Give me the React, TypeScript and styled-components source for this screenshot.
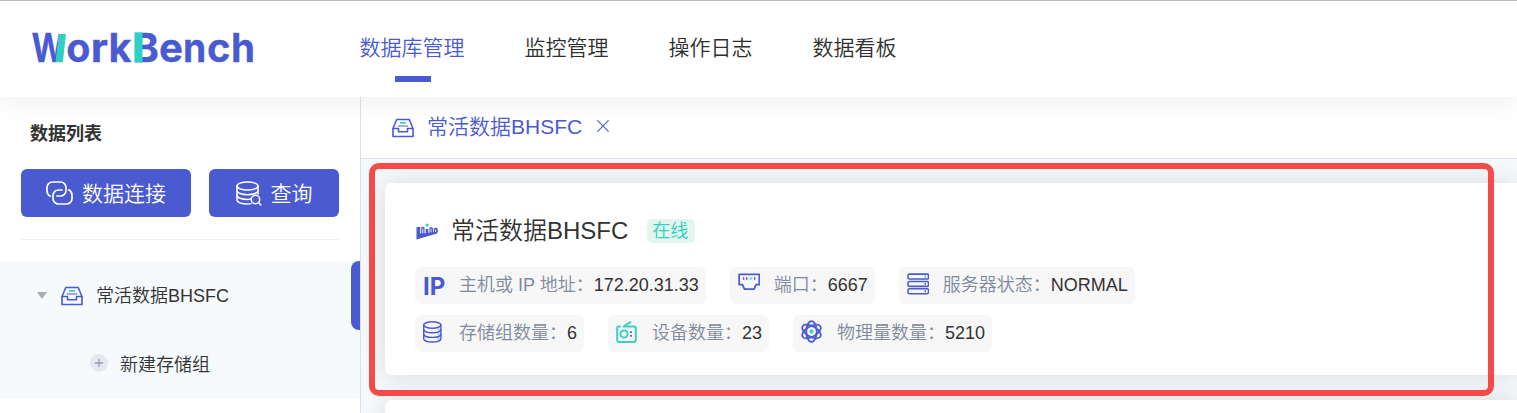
import React from "react";
import styled, { createGlobalStyle } from "styled-components";

const BLUE = "#4a5bd2";
const TEAL = "#2dd0c4";

const Global = createGlobalStyle`
  * { box-sizing: border-box; }
  html, body { margin: 0; padding: 0; overflow: hidden; }
  body {
    font-family: "Liberation Sans", "Noto Sans CJK SC", sans-serif;
    line-height: 1.5;
    color: #333;
    background: #fff;
  }
`;

const Page = styled.div`
  position: relative;
  display: flex;
  flex-direction: column;
  width: 1517px;
  height: 413px;
  overflow: hidden;
  background: #fff;
`;

const Header = styled.header`
  position: relative;
  z-index: 2;
  flex: none;
  display: flex;
  height: 97px;
  padding-left: 30px;
  border-top: 1px solid #b9b9b9;
  background: #fff;
  box-shadow: 0 6px 24px rgba(0, 0, 0, 0.06);
`;

const Logo = styled.svg`
  flex: none;
  width: 230px;
  height: 96px;
  margin-right: 99.5px;
  font-family: Inter, sans-serif;
  font-weight: 700;
`;

const Nav = styled.nav`
  display: flex;
  gap: 60px;
`;

const NavItem = styled.a<{ $active?: boolean }>`
  display: flex;
  flex-direction: column;
  align-items: center;
  padding-top: 31px;
  font-size: 21px;
  line-height: 31px;
  font-weight: 350;
  white-space: nowrap;
  color: ${(p) => (p.$active ? BLUE : "#2f2f2f")};

  &::after {
    content: "";
    width: 36px;
    height: 6px;
    margin: 13px 0 0 2px;
    background: ${(p) => (p.$active ? BLUE : "transparent")};
  }
`;

const Body = styled.div`
  flex: 1;
  display: flex;
  min-height: 0;
`;

const Sidebar = styled.aside`
  flex: none;
  width: 361px;
  border-right: 1px solid #dcdfe4;
  background: #fff;
`;

const SideTitle = styled.h2`
  margin: 0;
  padding: 24px 0 0 30px;
  font-size: 18px;
  line-height: 27px;
  font-weight: 700;
`;

const Buttons = styled.div`
  display: flex;
  gap: 18px;
  margin: 21px 21px 0;
  padding-bottom: 22px;
  border-bottom: 1px solid #f0f0f0;
`;

const Button = styled.button<{ $width: number }>`
  display: flex;
  align-items: center;
  justify-content: center;
  gap: 9px;
  width: ${(p) => p.$width}px;
  height: 48px;
  padding: 0;
  border: 0;
  border-radius: 6px;
  background: ${BLUE};
  color: #fff;
  font: 350 21px/30px "Liberation Sans", "Noto Sans CJK SC", sans-serif;
`;

const ButtonText = styled.span`
  padding-top: 2px;
`;

const Tree = styled.div`
  margin-top: 21px;
  background: #f6fafd;
`;

const TreeNode = styled.div<{ $indent: number; $gap: number; $selected?: boolean }>`
  display: flex;
  align-items: center;
  height: 69px;
  padding-left: ${(p) => p.$indent}px;
  gap: ${(p) => p.$gap}px;
  font-size: 18px;
  font-weight: 350;

  &::after {
    content: "";
    display: ${(p) => (p.$selected ? "block" : "none")};
    align-self: stretch;
    width: 9px;
    margin-left: auto;
    border-radius: 8px 0 0 8px;
    background: ${BLUE};
  }
`;

const TreeText = styled.span`
  padding-top: 2px;
`;

const Caret = styled.span`
  border: 5.5px solid transparent;
  border-top: 7px solid #a9abb0;
  border-bottom: 0;
`;

const Plus = styled.span`
  display: grid;
  place-items: center;
  width: 18px;
  height: 18px;
  margin-top: -3px;
  border-radius: 50%;
  background: #e6e8f0;
`;

const Main = styled.main`
  flex: 1;
  min-width: 0;
  display: flex;
  flex-direction: column;
  background: #f5f9fc;
`;

const TabBar = styled.div`
  flex: none;
  display: flex;
  height: 62px;
  padding-left: 31px;
  border-bottom: 1px solid #dfe4ea;
  background: #fff;
`;

const Tab = styled.div`
  display: flex;
  align-items: center;
  gap: 13px;
  height: 60px;
  color: ${BLUE};
  font-size: 21px;
  font-weight: 350;

  svg:first-child {
    margin-top: 1px;
  }

  svg:last-child {
    margin: -2px 0 0 2px;
  }
`;

const Cards = styled.div`
  flex: 1;
  min-height: 0;
  display: flex;
  flex-direction: column;
  gap: 25px;
  padding: 24px 0 0 24px;
  overflow: hidden;
`;

const Card = styled.section`
  flex: none;
  height: 192px;
  padding: 30px;
  border-radius: 6px 0 0 6px;
  background: #fff;
  box-shadow: 0 0 24px rgba(0, 0, 0, 0.12);
`;

const CardTitle = styled.div`
  display: flex;
  align-items: center;
  height: 36px;
  font-size: 24px;
  font-weight: 350;
`;

const CardName = styled.span`
  margin: 0 19px 0 12px;
`;

const Tag = styled.span`
  height: 24px;
  padding: 0 7px 0 5px;
  border-radius: 5px;
  background: #e2f6ee;
  color: ${TEAL};
  font-size: 18px;
  line-height: 24px;
`;

const ChipRow = styled.div<{ $top: number }>`
  display: flex;
  gap: 24px;
  margin-top: ${(p) => p.$top}px;
`;

const Chip = styled.div`
  display: flex;
  align-items: center;
  height: 37px;
  padding: 0 7px 0 8px;
  border-radius: 6px;
  background: #f7f7f7;
  font-size: 18px;
  font-weight: 350;
  white-space: nowrap;
`;

const ChipIcon = styled.span<{ $lift?: number }>`
  display: flex;
  width: 22.5px;
  margin-right: 13.5px;
  padding-bottom: ${(p) => p.$lift ?? 4}px;
`;

const ChipLabel = styled.span`
  color: #808a9c;
`;

const IpMark = styled.b`
  padding-top: 2px;
  font: 700 24px/25px Inter, sans-serif;
  color: ${BLUE};
`;

const Highlight = styled.div`
  position: absolute;
  z-index: 3;
  left: 369px;
  top: 163px;
  width: 1125px;
  height: 233px;
  border: 6px solid #f44b48;
  border-radius: 10px;
`;

const stroke = (color: string, width: number) => ({
  fill: "none",
  stroke: color,
  strokeWidth: width,
  strokeLinecap: "round" as const,
  strokeLinejoin: "round" as const,
});

const InboxIcon = () => (
  <svg width="22" height="20" viewBox="0 0 22 20">
    <g {...stroke(BLUE, 1.6)}>
      <path d="M1 10.5 4.8 1.5h12.4L21 10.5" />
      <path d="M1 10.5h5.5v3.2h9v-3.2H21v8H1z" />
      <path d="M6.2 8h9.6" strokeWidth="1.2" />
    </g>
    <path d="M8 4.8h6" stroke={TEAL} strokeWidth="1.6" />
  </svg>
);

const LinkIcon = () => (
  <svg width="27" height="24" viewBox="0 0 27 24">
    <g {...stroke("#fff", 1.7)}>
      <path d="M4.2 15.2C2.2 14 1 12.3 1 10V6.5A5.5 5.5 0 0 1 6.5 1h8A5.5 5.5 0 0 1 20 6.5v3a5.5 5.5 0 0 1-5.5 5.5H11" />
      <path d="M22.8 8.8C24.8 10 26 11.7 26 14v3.5A5.5 5.5 0 0 1 20.5 23h-8A5.5 5.5 0 0 1 7 17.5v-3A5.5 5.5 0 0 1 12.5 9H16" />
    </g>
  </svg>
);

const QueryIcon = () => (
  <svg width="26" height="25" viewBox="0 0 26 25">
    <g {...stroke("#fff", 1.5)}>
      <ellipse cx="11.5" cy="5" rx="10.5" ry="4" />
      <path d="M1 5v14c0 2.2 4.5 4 10 4 1.5 0 3-.1 4-.4M22 5v8" />
      <path d="M1 9.7c0 2.2 4.7 4 10.5 4S22 11.9 22 9.7M1 14.400c0 2.200 4.700 4 10.500 4 1.300 0 2.500-.1 3.500-.3" />
      <circle cx="19.5" cy="18.5" r="4.200" />
      <path d="m22.600 21.600 2.200 2.400" />
    </g>
  </svg>
);

const CloseIcon = () => (
  <svg width="12" height="12" viewBox="0 0 12 12">
    <path d="m.7.7 10.600 10.600M11.300.7.7 11.300" {...stroke(BLUE, 1.1)} />
  </svg>
);

const PlusIcon = () => (
  <svg width="8" height="8" viewBox="0 0 8 8">
    <path d="M4 0v8M0 4h8" stroke="#959bb3" strokeWidth="1.3" />
  </svg>
);

const ServerBrandIcon = () => (
  <svg width="24" height="18" viewBox="0 0 24 18">
    <path
      fill={BLUE}
      fillRule="evenodd"
      d="M1.500 5h3.700v6.500h1V5.500L8 4.500l1.500 1v5.700h1.200V7h2.600v3.700h1.200V6L16 5l2 1v4h.8V6.500l1.500-1 2 .8.500 1.500v2L22 11.500 1.500 17.500zM7.400 6.500v4.800h.9V6.500zM15.700 7v3.300h.8V7zM20.200 7.500V10h.8V7.500z"
    />
    <circle cx="12.200" cy="3" r="1.500" fill={TEAL} />
  </svg>
);

const PortIcon = () => (
  <svg width="23" height="18" viewBox="0 0 23 18">
    <path d="M1.200 1.200h20.600v10.500h-3.400l-2 4.500H6.600l-2-4.500H1.200z" {...stroke(BLUE, 1.8)} />
    <path d="M5.700 4.200v2.400M9 4.200v2.400M17 4.200v2.400" stroke={BLUE} strokeWidth="1.500" />
    <path d="M13 4.200v2.400" stroke={TEAL} strokeWidth="1.500" />
  </svg>
);

const ServersIcon = () => (
  <svg width="23" height="22" viewBox="0 0 23 22">
    {[0.9, 8.4, 15.9].map((y, i) => (
      <g key={y}>
        <rect x="1" y={y} width="21" height="5" rx="1.5" {...stroke(BLUE, 1.6)} />
        <path d={`M18.7 ${y + 1.5}v2`} stroke={i === 0 ? TEAL : BLUE} strokeWidth="1.5" />
      </g>
    ))}
  </svg>
);

const DatabaseIcon = () => (
  <svg width="20" height="22" viewBox="0 0 20 22">
    <g {...stroke(BLUE, 1.4)}>
      <ellipse cx="9.300" cy="4" rx="8.600" ry="3.200" />
      <path d="M.7 4v13.800c0 1.800 3.800 3.200 8.600 3.200s8.600-1.400 8.600-3.200V4" />
      <path d="M.7 8.600c0 1.800 3.800 3.200 8.600 3.200s8.600-1.400 8.600-3.200M.7 13.200c0 1.800 3.800 3.200 8.600 3.200s8.600-1.400 8.600-3.200" />
    </g>
    <path d="M14.800 8.200h1.600M14.800 13h1.600M14.800 17.600h1.600" stroke={TEAL} strokeWidth="1.2" />
  </svg>
);

const RadioIcon = () => (
  <svg width="21" height="22" viewBox="0 0 21 22">
    <g {...stroke("#3bcfc5", 2)}>
      <path d="M4 5.500H3a1.800 1.800 0 0 0-1.800 1.800v11.800A1.800 1.800 0 0 0 3 20.900h15a1.800 1.800 0 0 0 1.800-1.800V7.300A1.800 1.800 0 0 0 18 5.500H7.500L14.500 1.200" />
      <circle cx="8" cy="13" r="3.600" />
    </g>
    <path d="M14.900 10.200v1.900M14.900 13.900v1.900" stroke={BLUE} strokeWidth="1.9" />
  </svg>
);

const AtomIcon = () => (
  <svg width="22" height="23" viewBox="0 0 22 23">
    <g {...stroke(BLUE, 1.8)}>
      {[0, 60, 120].map((a) => (
        <ellipse key={a} cx="10.500" cy="11.500" rx="5.200" ry="10.300" transform={`rotate(${a} 10.500 11.500)`} />
      ))}
    </g>
    <circle cx="10.500" cy="11.500" r="2" fill={TEAL} />
  </svg>
);

const letters: [string, number, number][] = [
  ["o", 36.3, 24.2],
  ["r", 60.7, 17.2],
  ["k", 78.5, 23],
  ["B", 102.5, 26.4],
  ["e", 129, 24],
  ["n", 153, 23.2],
  ["c", 177, 23.5],
  ["h", 201, 24],
];

const WorkBenchLogo = () => (
  <Logo viewBox="0 0 230 96">
    <clipPath id="w-left">
      <path d="M0 28h29.5L26 64H0z" />
    </clipPath>
    <g fill={BLUE} stroke={BLUE} strokeWidth="0.3" fontSize="40">
      <text x="1.500" y="61" textLength="33.5" lengthAdjust="spacingAndGlyphs" clipPath="url(#w-left)">W</text>
      {letters.map(([c, x, w]) => (
        <text key={c + x} x={x} y="61" textLength={w} lengthAdjust="spacingAndGlyphs">{c}</text>
      ))}
    </g>
    <path d="M29 33h7L32.800 61.300h-7.300z" fill={TEAL} />
    <path d="M104.500 31.500h8v30h-8z" fill={TEAL} />
  </Logo>
);

interface ChipData {
  icon: React.ReactNode;
  label: string;
  value: string;
  lift?: number;
}

const chipRows: ChipData[][] = [
  [
    { icon: <IpMark>IP</IpMark>, label: "主机或 IP 地址：", value: "172.20.31.33", lift: 0 },
    { icon: <PortIcon />, label: "端口：", value: "6667", lift: 8 },
    { icon: <ServersIcon />, label: "服务器状态：", value: "NORMAL" },
  ],
  [
    { icon: <DatabaseIcon />, label: "存储组数量：", value: "6" },
    { icon: <RadioIcon />, label: "设备数量：", value: "23" },
    { icon: <AtomIcon />, label: "物理量数量：", value: "5210" },
  ],
];

const navItems = ["数据库管理", "监控管理", "操作日志", "数据看板"];

export default function App() {
  return (
    <Page>
      <Global />
      <Header>
        <WorkBenchLogo />
        <Nav>
          {navItems.map((item, i) => (
            <NavItem key={item} $active={i === 0}>{item}</NavItem>
          ))}
        </Nav>
      </Header>
      <Body>
        <Sidebar>
          <SideTitle>数据列表</SideTitle>
          <Buttons>
            <Button $width={170}><LinkIcon /><ButtonText>数据连接</ButtonText></Button>
            <Button $width={130}><QueryIcon /><ButtonText>查询</ButtonText></Button>
          </Buttons>
          <Tree>
            <TreeNode $indent={37} $gap={13.5} $selected>
              <Caret />
              <InboxIcon />
              <TreeText>常活数据BHSFC</TreeText>
            </TreeNode>
            <TreeNode $indent={90} $gap={12}>
              <Plus><PlusIcon /></Plus>
              <TreeText>新建存储组</TreeText>
            </TreeNode>
          </Tree>
        </Sidebar>
        <Main>
          <TabBar>
            <Tab>
              <InboxIcon />
              <span>常活数据BHSFC</span>
              <CloseIcon />
            </Tab>
          </TabBar>
          <Cards>
            <Card>
              <CardTitle>
                <ServerBrandIcon />
                <CardName>常活数据BHSFC</CardName>
                <Tag>在线</Tag>
              </CardTitle>
              {chipRows.map((row, i) => (
                <ChipRow key={i} $top={i === 0 ? 18 : 11}>
                  {row.map((chip) => (
                    <Chip key={chip.label}>
                      <ChipIcon $lift={chip.lift}>{chip.icon}</ChipIcon>
                      <ChipLabel>{chip.label}</ChipLabel>
                      <span>{chip.value}</span>
                    </Chip>
                  ))}
                </ChipRow>
              ))}
            </Card>
            <Card />
          </Cards>
        </Main>
      </Body>
      <Highlight />
    </Page>
  );
}
